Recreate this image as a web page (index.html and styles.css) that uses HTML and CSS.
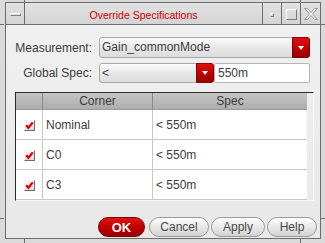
FILE: index.html
```html
<!DOCTYPE html>
<html lang="en">
<head>
    <meta charset="UTF-8">
    <title>Override Specifications</title>
    <link rel="stylesheet" href="styles.css">
</head>
<body>
<div class="screen">
    <div class="window">
        <div class="titlebar">
            <div class="tb-btn menu"><span class="menu-bar"></span></div>
            <div class="title">Override Specifications</div>
            <div class="tb-btn"><span class="mini"></span></div>
            <div class="tb-btn"><span class="maxi"></span></div>
            <div class="tb-btn close">
                <svg width="16" height="14" viewBox="0 0 16 14">
                    <path d="M1.5 1.5 L4.5 1.5 L8 5.5 L11.5 1.5 L14.5 1.5 L9.5 7 L14.5 12.5 L11.5 12.5 L8 8.5 L4.5 12.5 L1.5 12.5 L6.5 7 Z" fill="#f4f4f4" stroke="#9a9a9a" stroke-width="1"/>
                </svg>
            </div>
        </div>

        <div class="content">
            <div class="form-row">
                <div class="label">Measurement:</div>
                <div class="combo wide">
                    <span class="combo-text">Gain_commonMode</span>
                    <span class="combo-arrow"><span class="tri"></span></span>
                </div>
            </div>
            <div class="form-row second">
                <div class="label">Global Spec:</div>
                <div class="combo narrow">
                    <span class="combo-text">&lt;</span>
                    <span class="combo-arrow"><span class="tri"></span></span>
                </div>
                <div class="text-field">550m</div>
            </div>

            <div class="table-frame">
                <table class="spec-table">
                    <tr class="head">
                        <th class="col-check"></th>
                        <th class="col-corner">Corner</th>
                        <th>Spec</th>
                    </tr>
                    <tr>
                        <td class="col-check"><span class="checkbox"><svg width="9" height="9" viewBox="0 0 9 9"><path d="M1.2 4.2 L3.4 6.8 L7.8 1.4" fill="none" stroke="#e00000" stroke-width="2.2"/></svg></span></td>
                        <td>Nominal</td>
                        <td>&lt; 550m</td>
                    </tr>
                    <tr>
                        <td class="col-check"><span class="checkbox"><svg width="9" height="9" viewBox="0 0 9 9"><path d="M1.2 4.2 L3.4 6.8 L7.8 1.4" fill="none" stroke="#e00000" stroke-width="2.2"/></svg></span></td>
                        <td>C0</td>
                        <td>&lt; 550m</td>
                    </tr>
                    <tr>
                        <td class="col-check"><span class="checkbox"><svg width="9" height="9" viewBox="0 0 9 9"><path d="M1.2 4.2 L3.4 6.8 L7.8 1.4" fill="none" stroke="#e00000" stroke-width="2.2"/></svg></span></td>
                        <td>C3</td>
                        <td>&lt; 550m</td>
                    </tr>
                </table>
            </div>

            <div class="button-row">
                <button class="btn ok">OK</button>
                <button class="btn cancel">Cancel</button>
                <button class="btn apply">Apply</button>
                <button class="btn help">Help</button>
            </div>
        </div>
    </div>

    <!-- resize handle marks of the window frame -->
    <span class="tick v" style="left:24px; top:0;"></span>
    <span class="tick v" style="left:300px; top:0;"></span>
    <span class="tick v" style="left:24px; top:239px;"></span>
    <span class="tick v" style="left:300px; top:239px;"></span>
    <span class="tick h" style="left:0; top:24px;"></span>
    <span class="tick h" style="left:321px; top:24px;"></span>
    <span class="tick h" style="left:0; top:218px;"></span>
    <span class="tick h" style="left:321px; top:218px;"></span>
</div>
</body>
</html>
```

FILE: styles.css
```css
body {
    margin: 0;
    background-color: #dadada;
    font-family: "Liberation Sans", Arial, sans-serif;
    font-size: 12px;
    color: #3c3c3c;
}

.screen {
    position: relative;
    width: 325px;
    height: 243px;
    overflow: hidden;
}

.window {
    margin: 2px 0 0 5px;
    width: 316px;
    height: 237px;
    box-sizing: border-box;
    border: 1px solid #6c6c6c;
    display: flex;
    flex-direction: column;
}

.tick {
    position: absolute;
    background-color: #6c6c6c;
}
.tick.v {
    width: 1px;
    height: 4px;
}
.tick.h {
    width: 4px;
    height: 1px;
}

/* title bar */
.titlebar {
    height: 22px;
    box-sizing: border-box;
    border-bottom: 1px solid #6c6c6c;
    display: flex;
    background: linear-gradient(#e2e2e2, #d4d4d4);
}

.tb-btn {
    width: 18px;
    border-left: 1px solid #6c6c6c;
    display: flex;
    align-items: center;
    justify-content: center;
}
.tb-btn.menu {
    border-left: none;
    border-right: 1px solid #6c6c6c;
}
.tb-btn.close {
    width: 19px;
}

.menu-bar {
    width: 9px;
    height: 1px;
    border: 1px solid;
    border-color: #fff #808080 #808080 #fff;
    background-color: #d8d8d8;
    margin-top: 2px;
}

.mini {
    width: 2px;
    height: 2px;
    border: 1px solid;
    border-color: #fff #7a7a7a #7a7a7a #fff;
    margin-top: 2px;
}

.maxi {
    width: 9px;
    height: 9px;
    border: 1px solid;
    border-color: #fff #7a7a7a #7a7a7a #fff;
    margin-top: 1px;
}

.title {
    flex: 1;
    text-align: center;
    color: #cc0000;
    font-size: 10.5px;
    line-height: 21px;
    padding-top: 2px;
    box-sizing: border-box;
}

/* dialog body */
.content {
    flex: 1;
    display: flex;
    flex-direction: column;
    padding: 12px 3px 1px 0;
    background: linear-gradient(#f0f0f0, #e8e8e8);
}

.form-row {
    display: flex;
    align-items: center;
    height: 21px;
}
.form-row.second {
    height: 20px;
    margin-top: 5px;
}

.label {
    width: 93px;
    padding-right: 7px;
    box-sizing: border-box;
    text-align: right;
}

.combo {
    height: 100%;
    box-sizing: border-box;
    display: flex;
    border: 1px solid #a8a8a8;
    border-radius: 3px;
    background: linear-gradient(#fbfbfb, #e6e6e6 55%, #dcdcdc);
}
.combo.wide {
    width: 211px;
}
.combo.narrow {
    width: 115px;
}

.combo-text {
    flex: 1;
    padding-left: 2px;
    line-height: 19px;
}

.combo-arrow {
    width: 16px;
    margin: -1px -1px -1px 0;
    border: 1px solid #8a0000;
    border-radius: 0 3px 3px 0;
    background: linear-gradient(#e01010, #b80000 60%, #980000);
    display: flex;
    align-items: center;
    justify-content: center;
}

.tri {
    width: 0;
    height: 0;
    border-left: 3px solid transparent;
    border-right: 3px solid transparent;
    border-top: 4px solid #fff;
}

.text-field {
    width: 96px;
    height: 100%;
    box-sizing: border-box;
    border: 1px solid #b4b4b4;
    border-radius: 2px;
    background-color: #fff;
    padding-left: 3px;
    line-height: 18px;
}

/* corner table */
.table-frame {
    margin: 9px 0 0 9px;
    width: 299px;
    height: 109px;
    box-sizing: border-box;
    border: 1px solid;
    border-color: #2a2a2a #f8f8f8 #f8f8f8 #2a2a2a;
}

.spec-table {
    width: 291px;
    border-collapse: collapse;
    background-color: #fff;
}

.spec-table th {
    height: 16px;
    padding: 0;
    font-weight: normal;
    color: #3c3c3c;
    background: linear-gradient(#c4c4c4, #aeaeae);
    border-left: 1px solid #888;
    border-bottom: 1px solid #9a9a9a;
}
.spec-table th.col-check {
    border-left: none;
}

.spec-table td {
    height: 29px;
    padding: 0 0 0 3px;
    border-left: 1px solid #c8c8c8;
    border-bottom: 1px solid #c8c8c8;
}
.spec-table td.col-check {
    border-left: none;
    padding: 0;
    text-align: center;
}

.col-check {
    width: 26px;
}
.col-corner {
    width: 109px;
}

.checkbox {
    display: inline-flex;
    align-items: center;
    justify-content: center;
    width: 11px;
    height: 11px;
    box-sizing: border-box;
    border: 1px solid;
    border-color: #f4f4f4 #6c6c6c #6c6c6c #f4f4f4;
    background: linear-gradient(#fafafa, #dadada);
    vertical-align: middle;
    margin-top: 1px;
}

/* buttons */
.button-row {
    margin-top: auto;
    display: flex;
    justify-content: flex-end;
    gap: 2px;
}

.btn {
    height: 20px;
    padding: 0;
    font-family: "Liberation Sans", Arial, sans-serif;
    font-size: 12px;
    color: #4a4a4a;
    border: 1px solid #9a9a9a;
    border-radius: 10px;
    background: linear-gradient(#fdfdfd, #e8e8e8 50%, #d2d2d2);
}
.btn.ok {
    width: 47px;
    margin-right: 2px;
    color: #fff;
    font-weight: bold;
    font-size: 13px;
    border-color: #7a0000;
    background: linear-gradient(#e41414, #c00000 50%, #9c0000);
}
.btn.cancel {
    width: 60px;
}
.btn.apply {
    width: 54px;
}
.btn.help {
    width: 50px;
}
```
